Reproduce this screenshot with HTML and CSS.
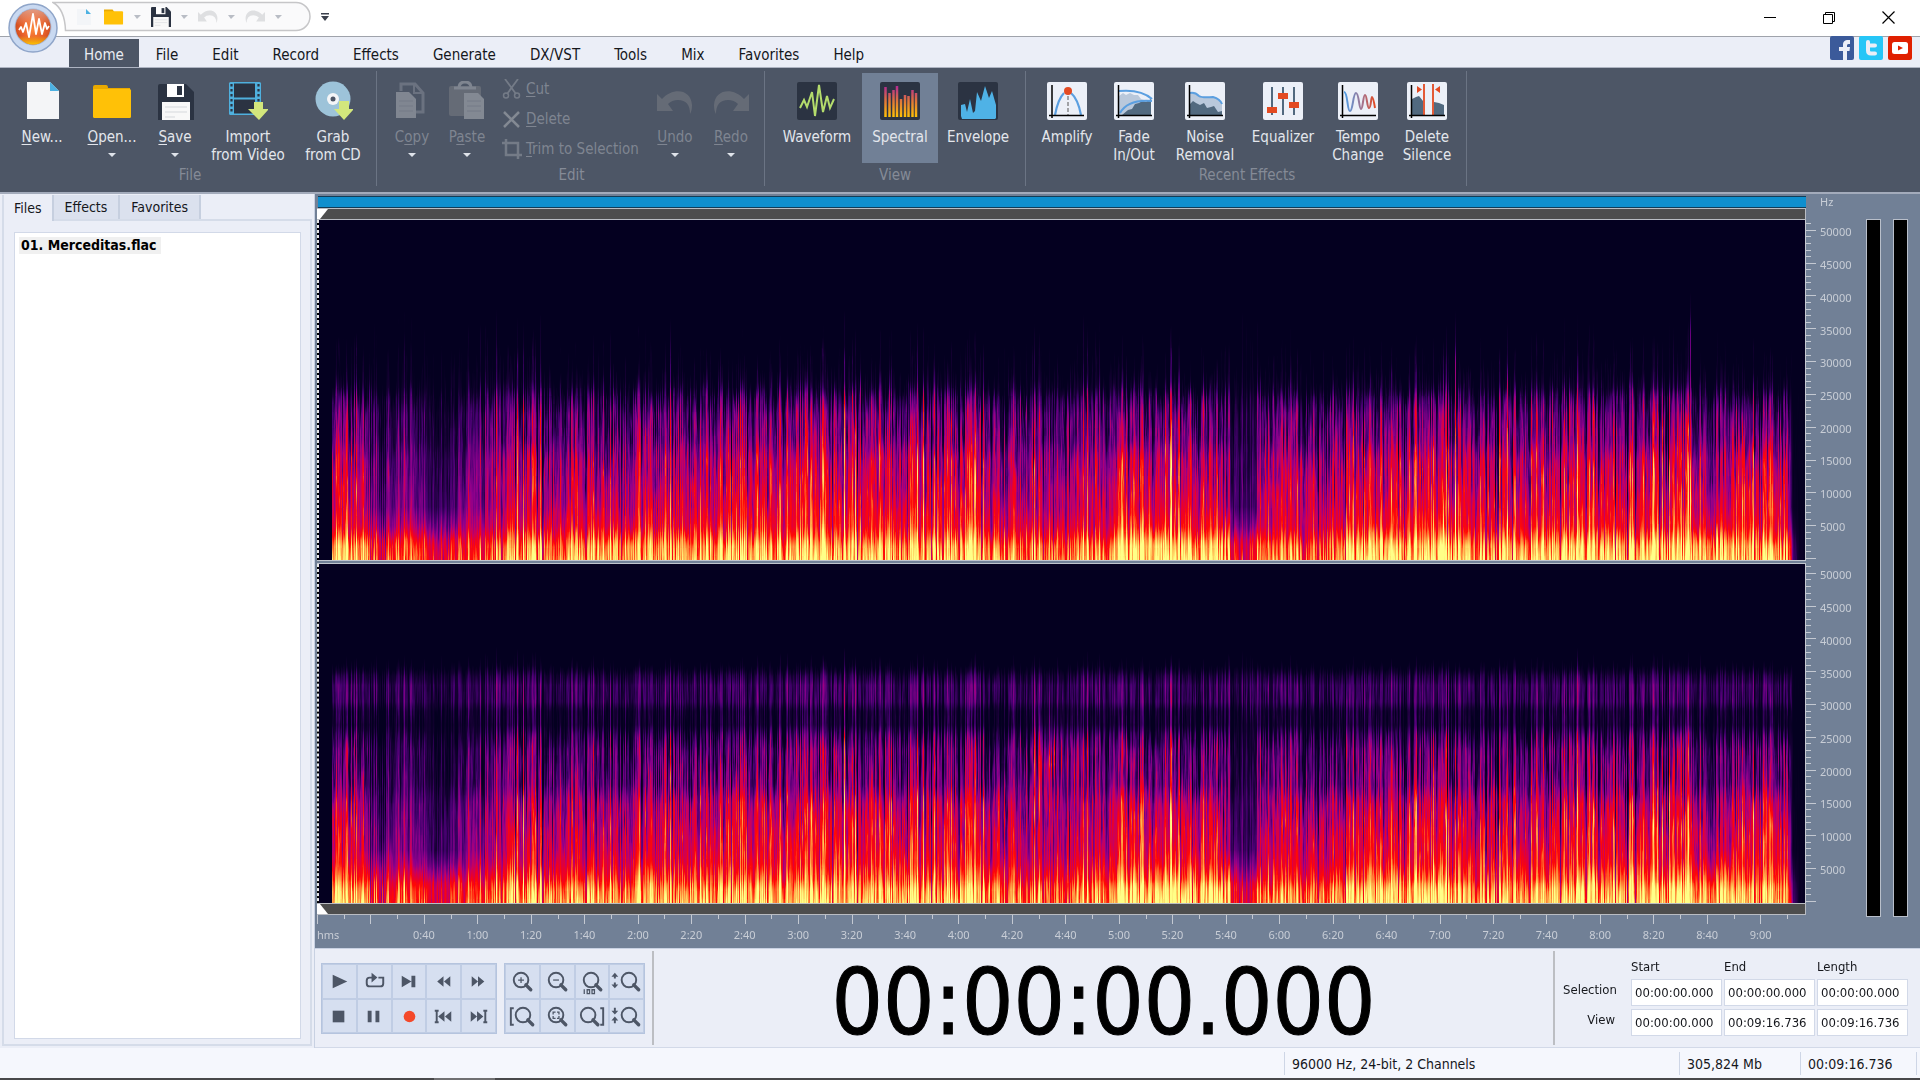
FILE: index.html
```html
<!DOCTYPE html>
<html lang="en">
<head>
<meta charset="utf-8">
<title>Audio Editor</title>
<link rel="stylesheet" href="styles.css">
</head>
<body>
<header class="titlebar">
  <button class="app-logo" aria-label="Application menu">
    <svg viewBox="0 0 50 50" width="50" height="50">
      <defs><radialGradient id="orb" cx=".5" cy=".55" r=".55"><stop offset="0" stop-color="#ff8a3c"/><stop offset=".6" stop-color="#e8602a"/><stop offset="1" stop-color="#c9481c"/></radialGradient>
      <linearGradient id="orbGlow" x1="0" y1="0" x2="0" y2="1"><stop offset="0" stop-color="#fff" stop-opacity=".45"/><stop offset=".45" stop-color="#fff" stop-opacity="0"/><stop offset=".75" stop-color="#ffd000" stop-opacity="0"/><stop offset="1" stop-color="#ffd000" stop-opacity=".9"/></linearGradient></defs>
      <circle cx="25" cy="25" r="24" fill="#c9d9f1" stroke="#8fa5c9" stroke-width="1.5"/>
      <circle cx="25" cy="24" r="18.5" fill="#a9b9d6"/>
      <circle cx="25" cy="24" r="17.5" fill="url(#orb)"/><circle cx="25" cy="24" r="17.5" fill="url(#orbGlow)"/>
      <path d="M11 27l2-3 2 5 3-9 3 14 4-23 3 20 3-15 3 15 3-11 2 6 2-3" fill="none" stroke="#fff" stroke-width="1.8" stroke-linejoin="round"/>
    </svg>
  </button>
  <nav class="quick" aria-label="Quick access">
    <svg class="quick-shape" viewBox="0 0 260 32" width="260" height="32"><path d="M1 2.500H244a14 14 0 0 1 0 28H13.500C13 16 9 7 1 2.500z" fill="#fafafb" stroke="#c6c6c8" stroke-width="1.500"/></svg>
    <button class="q-btn" aria-label="New"><svg width="16" height="18" viewBox="0 0 16 18"><path d="M1 1h9l5 5v11H1z" fill="#f3f5f8"/><path d="M10 1l5 5h-5z" fill="#4db1e2"/></svg></button>
    <button class="q-btn" aria-label="Open"><svg width="21" height="18" viewBox="0 0 21 18"><path d="M0 1h9l2 3H0z" fill="#e9a900"/><rect y="3" width="20" height="14" rx="1" fill="#ffc107"/></svg></button>
    <i class="caret pale"></i>
    <button class="q-btn" aria-label="Save"><svg width="21" height="20" viewBox="0 0 36 36"><use href="#floppy"/></svg></button>
    <i class="caret pale"></i>
    <button class="q-btn ghost" aria-label="Undo"><svg width="21" height="14" viewBox="0 0 36 24"><use href="#undo"/></svg></button>
    <i class="caret pale"></i>
    <button class="q-btn ghost" aria-label="Redo"><svg width="21" height="14" viewBox="0 0 36 24"><use href="#redo"/></svg></button>
    <i class="caret pale"></i>
    <button class="q-more" aria-label="Customize"><svg width="8" height="8" viewBox="0 0 8 8"><path d="M0 0h8v1.500H0zM0 3h8L4 8z" fill="#3a404c"/></svg></button>
  </nav>
  <div class="window-buttons">
    <button aria-label="Minimize"><svg width="13" height="13"><path d="M0 6.500h12" stroke="#000"/></svg></button>
    <button aria-label="Restore"><svg width="13" height="13"><path d="M.5 3.500h9v9h-9zM2.500 3.500v-2h9v9h-2" fill="none" stroke="#000"/></svg></button>
    <button aria-label="Close"><svg width="13" height="13"><path d="M.5.500l12 12M12.500.500l-12 12" stroke="#000" stroke-width="1.200"/></svg></button>
  </div>
</header>

<nav class="menu">
  <a class="active" href="#home">Home</a><a href="#file">File</a><a href="#edit">Edit</a><a href="#record">Record</a><a href="#effects">Effects</a><a href="#generate">Generate</a><a href="#dx">DX/VST</a><a href="#tools">Tools</a><a href="#mix">Mix</a><a href="#favorites">Favorites</a><a href="#help">Help</a>
  <div class="social">
    <button aria-label="Facebook"><svg width="24" height="24" viewBox="0 0 24 24"><rect width="24" height="24" rx="2" fill="#3b5a9a"/><path d="M13 24v-9H9v-4h4V9c0-4 2-5.500 7-5v4c-3-.3-3 0-3 3h3l-.5 4H17v9z" fill="#ebeef7"/></svg></button>
    <button aria-label="Twitter"><svg width="24" height="24" viewBox="0 0 24 24"><rect width="24" height="24" rx="2" fill="#26c6f7"/><path d="M9 6v8.500q0 3 3 3h4M9 9.500h7" fill="none" stroke="#ebeef7" stroke-width="4" stroke-linecap="round"/></svg></button>
    <button aria-label="YouTube"><svg width="24" height="24" viewBox="0 0 24 24"><rect width="24" height="24" rx="2" fill="#e02000"/><rect x="4" y="6" width="16" height="12" rx="2.500" fill="#fff"/><path d="M10 9.500l5 2.500-5 2.500z" fill="#e02000"/></svg></button>
  </div>
</nav>

<section class="ribbon" aria-label="Home">
  <div class="group narrow">
    <div class="tools">
      <button class="tool w70"><svg viewBox="0 0 40 40"><path d="M5 1h23l9 9v28H5z" fill="#f4f5f7"/><path d="M28 1l9 9h-9z" fill="#4db1e2"/></svg><span><u>N</u>ew...</span></button>
      <button class="tool w70"><svg viewBox="0 0 40 40"><path d="M1 6q0-2 2-2h11q2 0 2 3H38v6H1z" fill="#e9a900"/><rect x="1" y="8" width="38" height="29" rx="1.500" fill="#ffc107"/></svg><span><u>O</u>pen...</span><i class="caret"></i></button>
      <button class="tool w56"><svg viewBox="0 0 40 40"><defs><g id="floppy"><path d="M0 2q0-2 2-2h26l8 8v28H0z" fill="#2b3342"/><path d="M9 0h17v13H9z" fill="#fff"/><path d="M19 2h5v9h-5z" fill="#2b3342"/><path d="M4 18h28v18H4z" fill="#f8f8f8"/><path d="M7 23h22M7 28h22M7 33h10" stroke="#d5d8dc"/></g></defs><g transform="translate(3 3)"><use href="#floppy"/></g></svg><span><u>S</u>ave</span><i class="caret"></i></button>
      <button class="tool w90"><svg viewBox="0 0 40 40"><rect x="1" y="1" width="32" height="33" rx="1.500" fill="#4fb0de"/><path d="M6 2.500h21v14H6zM6 18.500h21v14H6z" fill="#2b3342"/><path d="M3.500 3v30M30.500 3v30" stroke="#2b3342" stroke-width="2.200" stroke-dasharray="2.500 2.500"/><path d="M26 21h9v7h6L31 39 20 28h6z" fill="#d3e77c"/></svg><span>Import<br>from Video</span></button>
      <button class="tool w80"><svg viewBox="0 0 40 40"><circle cx="20" cy="18" r="17.500" fill="#9dc3d9"/><circle cx="20" cy="18" r="6" fill="#f4f5f7"/><circle cx="20" cy="18" r="2.500" fill="#4d5666"/><path d="M26 20h10v8h5L31 39 21 28h5z" fill="#d3e77c"/></svg><span>Grab<br>from CD</span></button>
    </div>
    <h2>File</h2>
  </div>
  <div class="group">
    <div class="tools">
      <button class="tool w56 off" disabled><svg viewBox="0 0 40 40"><path d="M9 10V3h14l8 9v19H20" fill="none" stroke="#6b7280" stroke-width="3"/><path d="M22 3v9h9" fill="none" stroke="#6b7280" stroke-width="2"/><path d="M4 11h13l7 7v19H4z" fill="#808691"/><path d="M7 20h14M7 25h14M7 30h14" stroke="#747b87"/></svg><span>C<u>o</u>py</span><i class="caret"></i></button>
      <button class="tool w54 off" disabled><svg viewBox="0 0 40 40"><rect x="2" y="5" width="32" height="30" rx="2" fill="#656b76"/><path d="M12 7q0-6 6-6t6 6" fill="none" stroke="#7f8590" stroke-width="3"/><path d="M7 7h22" stroke="#7f8590" stroke-width="3"/><path d="M17 12h14l6 6v20H17z" fill="#838993"/><path d="M20 20h14M20 25h14M20 30h14" stroke="#747b87"/></svg><span>P<u>a</u>ste</span><i class="caret"></i></button>
      <div class="mini-list">
        <button class="mini" disabled><svg width="20" height="20" viewBox="0 0 20 20"><path d="M3 0l11 15M16 0L5 15" stroke="#747b87" stroke-width="1.800"/><circle cx="4" cy="16.500" r="2.500" fill="none" stroke="#747b87" stroke-width="1.500"/><circle cx="15" cy="16.500" r="2.500" fill="none" stroke="#747b87" stroke-width="1.500"/></svg><span><u>C</u>ut</span></button>
        <button class="mini" disabled><svg width="20" height="20" viewBox="0 0 20 20"><path d="M2 3l15 15M17 3L2 18" stroke="#838993" stroke-width="2.500"/></svg><span><u>D</u>elete</span></button>
        <button class="mini" disabled><svg width="20" height="20" viewBox="0 0 20 20"><path d="M0 4h16v16M4 0v16h16" fill="none" stroke="#747b87" stroke-width="2.500"/></svg><span><u>T</u>rim to Selection</span></button>
      </div>
      <button class="tool w56 off" disabled><svg viewBox="0 0 40 40"><g transform="translate(2 10)" fill="#656b76"><path id="undo" d="M0 3l5 5C16-4 34-2 35 14q0 6-2 9 0-14-12-14-6 0-10 4l5 7H0z"/></g></svg><span><u>U</u>ndo</span><i class="caret"></i></button>
      <button class="tool w56 off" disabled><svg viewBox="0 0 40 40"><g transform="translate(2 10)" fill="#656b76"><path id="redo" d="M36 3l-5 5C20-4 2-2 1 14q0 6 2 9 0-14 12-14 6 0 10 4l-5 7h16z"/></g></svg><span><u>R</u>edo</span><i class="caret"></i></button>
    </div>
    <h2>Edit</h2>
  </div>
  <div class="group wide">
    <div class="tools">
      <button class="tool w90"><svg viewBox="0 0 40 40"><rect y="1" width="40" height="38" rx="2" fill="#2b3342"/><path d="M3 27l4-8 3 7 5-15 3 24 4-31 4 27 4-16 3 12 4-9" fill="none" stroke="#b4dc6c" stroke-width="2"/></svg><span>Waveform</span></button>
      <button class="tool w76 on" aria-pressed="true"><svg viewBox="0 0 40 40"><defs><linearGradient id="bars" gradientUnits="userSpaceOnUse" x1="0" y1="4" x2="0" y2="36"><stop offset="0" stop-color="#b0249a"/><stop offset=".5" stop-color="#e0763a"/><stop offset="1" stop-color="#ffc107"/></linearGradient></defs><rect y="1" width="40" height="38" rx="2" fill="#2b3342"/><path d="M5.500 36V6M9.500 36V12M13.500 36V9M17 36V5M21 36V18M25 36V14M28.500 36V15M32.500 36V9M36 36V12" stroke="url(#bars)" stroke-width="2.500"/></svg><span>Spectral</span></button>
      <button class="tool w80"><svg viewBox="0 0 40 40"><rect y="1" width="40" height="38" rx="2" fill="#2b3342"/><path d="M3 35V24l4-1 2 8 3-13 3 14 2-2 2-19 4 9 4-15 4 12 3-7 4 14v13l-1 1H4z" fill="#4fb2e6"/></svg><span>Envelope</span></button>
    </div>
    <h2>View</h2>
  </div>
  <div class="group">
    <div class="tools">
      <button class="tool w68"><svg viewBox="0 0 40 40"><rect y="1" width="40" height="38" rx="2" fill="#ecf0f8"/><path d="M8 34Q11 18 17 12M24 12q7 6 10 22" fill="none" stroke="#5b9fe0" stroke-width="2.200"/><path d="M21 15v20" stroke="#555" stroke-dasharray="4 2"/><circle cx="21" cy="10" r="4" fill="#e34a22"/><path d="M5 4v33M2 34.500h35" stroke="#000" stroke-width="1.500"/></svg><span>Amplify</span></button>
      <button class="tool w66"><svg viewBox="0 0 40 40"><rect y="1" width="40" height="38" rx="2" fill="#ecf0f8"/><path d="M5 15l4-3 3 2 4-2 4 2 4 0 3 4 10 3v14H5z" fill="#b9c8db"/><path d="M8 34l6-5 4-1 3-5 4-1 3-2 4 1 5-3v17z" fill="#51697f"/><path d="M5 10q22-2 33 8M6 32q8-14 32-12" fill="none" stroke="#5b9fe0" stroke-width="2"/><path d="M4.500 4v33M2 34.500h36" stroke="#000" stroke-width="1.500"/></svg><span>Fade<br>In/Out</span></button>
      <button class="tool w76"><svg viewBox="0 0 40 40"><rect y="1" width="40" height="38" rx="2" fill="#ecf0f8"/><path d="M5 12q5-1 9 3 9 2 15 1 6 2 8 7v12H5z" fill="#b9c8db"/><path d="M5 23l3-3 3 2 4 2 4-2 3 5 4-1 3-1 4 6 4-1v5H5z" fill="#51697f"/><path d="M5 12q5-1 9 3 3 2 14 1 7 2 9 7" fill="none" stroke="#5b9fe0" stroke-width="2"/><path d="M4.500 4v33M2 34.500h36" stroke="#000" stroke-width="1.500"/></svg><span>Noise<br>Removal</span></button>
      <button class="tool w80"><svg viewBox="0 0 40 40"><rect y="1" width="40" height="38" rx="2" fill="#ecf0f8"/><path d="M9 6v28M20 6v28M31 6v28" stroke="#51697f" stroke-width="2"/><path d="M4 26h10v6H4zM15 12h10v6H15zM26 21h10v6H26z" fill="#e34a22"/></svg><span>Equalizer</span></button>
      <button class="tool w70"><svg viewBox="0 0 40 40"><defs><linearGradient id="hot"><stop offset="0" stop-color="#4d9fe8"/><stop offset=".6" stop-color="#a5728c"/><stop offset="1" stop-color="#e34a22"/></linearGradient></defs><rect y="1" width="40" height="38" rx="2" fill="#ecf0f8"/><path d="M6 11c4 0 3 19 6 19s3-18 6-18 3 16 5 16 2-14 4-14 2 13 4 13 2-11 3-11 2 5 3 11" fill="none" stroke="url(#hot)" stroke-width="2"/><path d="M4.500 4v33M2 34.500h36" stroke="#000" stroke-width="1.500"/></svg><span>Tempo<br>Change</span></button>
      <button class="tool w68"><svg viewBox="0 0 40 40"><rect y="1" width="40" height="38" rx="2" fill="#ecf0f8"/><path d="M5 18l4-2 3-1 4 5v14H5zM27 21l5 1 5 2v10H27z" fill="#51697f"/><path d="M17 3v32M26 3v32" stroke="#e34a22" stroke-width="1.800"/><path d="M10 5v7l5-3.500zM33 5v7l-5-3.500z" fill="#e34a22"/><path d="M4.500 4v33M2 34.500h36" stroke="#000" stroke-width="1.500"/></svg><span>Delete<br>Silence</span></button>
    </div>
    <h2>Recent Effects</h2>
  </div>
</section>

<main class="workspace">
  <aside class="side">
    <div class="side-tabs" role="tablist">
      <button role="tab" aria-selected="true">Files</button><button role="tab">Effects</button><button role="tab">Favorites</button>
    </div>
    <div class="side-body"><ul class="file-list"><li>01. Merceditas.flac</li></ul></div>
  </aside>

  <div class="main">
    <div class="stage">
      <div class="tracks">
        <div class="overview"></div>
        <div class="range"><svg width="11" height="10"><path d="M0 0h11L3 10H0z" fill="#fff"/></svg></div>
        <canvas class="channel" data-channel="1"></canvas>
        <div class="split"></div>
        <canvas class="channel" data-channel="2"></canvas>
        <div class="range"><svg width="11" height="10"><path d="M0 0h3l8 10H0z" fill="#fff"/></svg></div>
        <canvas class="time-ticks"></canvas>
        <div class="time-labels"><span class="unit">hms</span><span>0:40</span><span>1:00</span><span>1:20</span><span>1:40</span><span>2:00</span><span>2:20</span><span>2:40</span><span>3:00</span><span>3:20</span><span>3:40</span><span>4:00</span><span>4:20</span><span>4:40</span><span>5:00</span><span>5:20</span><span>5:40</span><span>6:00</span><span>6:20</span><span>6:40</span><span>7:00</span><span>7:20</span><span>7:40</span><span>8:00</span><span>8:20</span><span>8:40</span><span>9:00</span><i class="rest"></i></div>
      </div>
      <div class="scales">
        <div class="scale-unit">Hz</div>
        <div class="scale"><canvas class="hz-ticks"></canvas><div class="hz-labels"><span>50000</span><span>45000</span><span>40000</span><span>35000</span><span>30000</span><span>25000</span><span>20000</span><span>15000</span><span>10000</span><span>5000</span></div></div>
        <div class="scale"><canvas class="hz-ticks"></canvas><div class="hz-labels"><span>50000</span><span>45000</span><span>40000</span><span>35000</span><span>30000</span><span>25000</span><span>20000</span><span>15000</span><span>10000</span><span>5000</span></div></div>
      </div>
      <div class="meters"><div class="meter"></div><div class="meter"></div></div>
    </div>

    <div class="controls">
      <div class="pads">
        <div class="pad transport">
          <button aria-label="Play"><svg viewBox="0 0 34 34"><path d="M10 10l15 7-15 7z"/></svg></button>
          <button aria-label="Loop"><svg viewBox="0 0 34 34"><path d="M16 13h-4q-3 0-3 3v3q0 3 3 3h11q3 0 3-3v-6h-5" class="ln"/><path d="M14 8l6 5-6 5z"/></svg></button>
          <button aria-label="Play to end"><svg viewBox="0 0 34 34"><path d="M9 11l10 6-10 6zM19 11h4v12h-4z"/></svg></button>
          <button aria-label="Rewind"><svg viewBox="0 0 34 34"><path d="M17 11.500v11L10.500 17zM24 11.500v11L17.500 17z"/></svg></button>
          <button aria-label="Forward"><svg viewBox="0 0 34 34"><path d="M10 11.500v11l6.500-5.500zM16.500 11.500v11L23 17z"/></svg></button>
          <button aria-label="Stop"><svg viewBox="0 0 34 34"><path d="M10 11h12v12H10z"/></svg></button>
          <button aria-label="Pause"><svg viewBox="0 0 34 34"><path d="M10 11h4v12h-4zM18 11h4v12h-4z"/></svg></button>
          <button aria-label="Record"><svg viewBox="0 0 34 34"><circle cx="17" cy="17" r="6" fill="#f4492a"/></svg></button>
          <button aria-label="Go to start"><svg viewBox="0 0 34 34"><path d="M8 10h4v2h-1v10h1v2H8v-2h1V12H8zM18 11.500v11L11.500 17zM25 11.500v11L18.500 17z"/></svg></button>
          <button aria-label="Go to end"><svg viewBox="0 0 34 34"><path d="M9 11.500v11l6.500-5.500zM15.500 11.500v11L22 17zM22 10h4v2h-1v10h1v2h-4v-2h1V12h-1z"/></svg></button>
        </div>
        <div class="pad zoom">
          <button aria-label="Zoom in"><svg viewBox="0 0 34 34"><g id="lens"><circle cx="15.500" cy="15.500" r="7.500" class="ln thick"/><path d="M20.500 20.500l5 5" class="ln handle"/></g><path d="M12.500 15.500h6M15.500 12.500v6" class="ln fine"/></svg></button>
          <button aria-label="Zoom out"><svg viewBox="0 0 34 34"><use href="#lens"/><path d="M12.500 15.500h6" class="ln fine"/></svg></button>
          <button aria-label="Zoom 100"><svg viewBox="0 0 34 34"><use href="#lens"/><path d="M8.500 25v5M11.500 25.500h2.500v4h-2.500zM16.500 25.500H19v4h-2.500z" class="ln fine"/></svg></button>
          <button aria-label="Vertical zoom in"><svg viewBox="0 0 34 34"><g transform="translate(4 0)"><use href="#lens"/></g><path d="M5 8l3.500 4H6v2H4v-2H1.500zM5 24l3.500-4H6v-2H4v2H1.500z"/></svg></button>
          <button aria-label="Zoom selection start"><svg viewBox="0 0 34 34"><g transform="translate(2 0)"><use href="#lens"/></g><path d="M8 8.500H5v17h3" class="ln"/></svg></button>
          <button aria-label="Zoom to selection"><svg viewBox="0 0 34 34"><use href="#lens"/><path d="M12.500 15v-2.500H15M16.500 12.500H18.500V15M18.500 16.500v2.500h-2M15 19h-2.500v-2.500" class="ln fine"/></svg></button>
          <button aria-label="Zoom selection end"><svg viewBox="0 0 34 34"><g transform="translate(-3 0)"><use href="#lens"/></g><path d="M25 8.500h3v17h-3" class="ln"/></svg></button>
          <button aria-label="Vertical zoom out"><svg viewBox="0 0 34 34"><g transform="translate(4 0)"><use href="#lens"/></g><path d="M5 15l3.500-4H6V8H4v3H1.500zM5 17l3.500 4H6v3H4v-3H1.500z"/></svg></button>
        </div>
      </div>
      <output class="clock">00:00:00.000</output>
      <div class="times">
        <span></span><span class="col">Start</span><span class="col">End</span><span class="col">Length</span>
        <span class="row">Selection</span><input aria-label="Selection start" value="00:00:00.000"><input aria-label="Selection end" value="00:00:00.000"><input aria-label="Selection length" value="00:00:00.000">
        <span class="row">View</span><input aria-label="View start" value="00:00:00.000"><input aria-label="View end" value="00:09:16.736"><input aria-label="View length" value="00:09:16.736">
      </div>
    </div>
  </div>
</main>

<footer class="status">
  <span class="format">96000 Hz, 24-bit, 2 Channels</span><span class="size">305,824 Mb</span><span class="length">00:09:16.736</span><i class="grip"></i>
</footer>
<div class="dock"><i></i></div>
<script src="spectrum.js"></script>
</body>
</html>
```
FILE: styles.css
```css
* { box-sizing: border-box; }
html, body { height: 100%; margin: 0; }
body {
  display: flex; flex-direction: column; overflow: hidden;
  background: #ebeef7; color: #15171c;
  font: 14px/18px "DejaVu Sans Condensed", "Noto Sans", sans-serif;
}
button { margin: 0; padding: 0; border: 0; background: none; color: inherit; font: inherit; }
svg { display: block; flex: none; }
u { text-decoration-thickness: 1px; text-underline-offset: 2px; }

.titlebar { position: relative; display: flex; justify-content: space-between; flex: none; height: 37px; background: #fff; border-bottom: 1px solid #9fa3ab; }
.app-logo { position: absolute; left: 8px; top: 3px; z-index: 2; }
.quick { position: relative; display: flex; align-items: center; height: 33px; padding-left: 75px; }
.quick-shape { position: absolute; left: 52px; top: 0; }
.q-btn { position: relative; display: flex; justify-content: center; width: 28px; }
.q-btn svg { width: 20px; }
.q-btn:first-of-type { width: 18px; }
.q-btn:first-of-type svg { width: 16px; }
.q-btn + .q-btn { margin-left: 7px; }
.ghost { fill: #dedfe1; }
.q-more { margin-left: 33px; }
.caret { position: relative; display: block; width: 0; height: 0; border: 4px solid transparent; border-top: 4px solid #dfe3ea; border-bottom: 0; }
.quick .caret { margin: 0 6px; }
.caret.pale { border-top-color: #b9bdc5; border-left-width: 3px; border-right-width: 4px; }
.window-buttons { display: flex; padding-right: 2px; height: 35px; }
.window-buttons button { width: 59px; display: flex; justify-content: center; align-items: center; }

.menu { display: flex; align-items: stretch; flex: none; height: 31px; padding: 2px 8px 0 69px; border-bottom: 1px solid #aeb4c2; font-size: 15px; }
.menu a { padding: 7px 17px 0; color: #15171c; text-decoration: none; }
.menu a.active { padding: 7px 15px 0; background: #4d5666; color: #e9ecf2; }
.social { display: flex; align-items: flex-start; gap: 5px; margin: -3px 0 0 auto; z-index: 1; }

.ribbon { display: flex; flex: none; height: 126px; padding: 3px 0 6px; background: #4d5666; border-bottom: 2px solid #a3abbb; color: #e3e6ec; font-size: 15px; }
.group { display: flex; flex-direction: column; justify-content: space-between; padding: 2px 5px 2px 7px; border-right: 1px solid #6b7484; }
.group.narrow { padding-right: 3px; }
.group.wide { padding-right: 7px; }
.group h2 { margin: 0; font: inherit; text-align: center; color: #858b97; }
.tools { display: flex; }
.tool { display: flex; flex-direction: column; align-items: center; height: 90px; padding-top: 8px; white-space: nowrap; }
.tool > svg { width: 40px; height: 40px; }
.tool span { margin-top: 7px; }
.tool .caret { margin-top: 7px; }
.tool.on { background: #718096; }
.off, .mini { color: #7f8591; }
.w54 { width: 54px; } .w56 { width: 56px; } .w66 { width: 66px; } .w68 { width: 68px; } .w70 { width: 70px; }
.w76 { width: 76px; } .w80 { width: 80px; } .w90 { width: 90px; }
.mini-list { display: flex; flex-direction: column; gap: 10px; width: 153px; padding: 6px 0 0 8px; white-space: nowrap; }
.mini { display: flex; align-items: center; gap: 4px; height: 20px; }

.workspace { display: flex; flex: 1; min-height: 0; }
.side { display: flex; flex-direction: column; flex: none; width: 315px; padding: 1px 2px 2px; border-right: 1px solid #c8d1e2; }
.side-tabs { display: flex; height: 24px; flex: none; z-index: 1; }
.side-tabs button { padding: 0 11px; background: #dbe1ee; border: 1px solid #c6cfdf; border-width: 0 2px 0 0; }
.side-tabs button[aria-selected] { height: 26px; padding: 0 10px; background: #ebeef7; border-left: 2px solid #d5dce9; }
.side-body { flex: 1; padding: 11px 9px 5px 10px; border: 2px solid #d5dce9; }
.file-list { height: 100%; margin: 0; padding: 4px; list-style: none; background: #fff; border: 1px solid #d2d9e8; }
.file-list li { width: max-content; padding: 0 5px 0 2px; background: #f0f0f0; font-weight: bold; color: #000; line-height: 17px; }

.main { display: flex; flex-direction: column; flex: 1; min-width: 0; }
.stage { display: flex; flex: 1; min-height: 0; padding: 2px 0 0 2px; background: #718096; border-bottom: 1px solid #c8d1e2; }
.tracks { display: flex; flex-direction: column; flex: 1; min-width: 0; }
.overview { height: 12px; margin-left: 1px; background: #0f8fce; border: 1px solid #123d58; border-width: 1px 0; }
.range { height: 12px; background: #4d4d4d; border: 1px solid #b9bcc2; border-width: 1px 1px 1px 0; }
.channel { display: block; flex: 1 1 0; width: 100%; min-height: 0; border-right: 1px solid #c4c8d0; }
.split { height: 4px; border: 1px solid #c0c5ce; border-width: 1px 0; }
.time-ticks { display: block; width: 100%; height: 10px; }
.time-labels { display: flex; height: 23px; padding-top: 2px; color: #c8cdd6; font: 11px/16px "Noto Sans", sans-serif; }
.time-labels span { flex: 20 1 0; width: 0; text-align: center; white-space: nowrap; }
.time-labels .unit { flex-grow: 30; text-align: left; }
.time-labels .rest { flex: 7 1 0; }
.scales { display: flex; flex-direction: column; flex: none; gap: 4px; width: 60px; padding-bottom: 46px; color: #c8cdd6; font: 11px/16px "Noto Sans", sans-serif; }
.scale-unit { height: 20px; padding-left: 14px; line-height: 12px; }
.scale { display: flex; flex: 1; min-height: 0; gap: 4px; }
.hz-ticks { width: 10px; height: 100%; }
.hz-labels { display: flex; flex-direction: column; padding: 0 0 16px; margin-top: -4px; justify-content: flex-end; }
.hz-labels span { display: flex; align-items: center; flex: 0 0 10%; height: 10%; }
.meters { display: flex; gap: 12px; flex: none; width: 54px; padding: 23px 0 31px; }
.meter { width: 15px; background: #000; border: 1px solid #b9bfca; }

.controls { display: flex; flex: none; height: 99px; padding: 2px 0; border-bottom: 1px solid #d2d9e8; }
.pads { display: flex; gap: 7px; padding: 12px 7px 0 6px; border-right: 2px solid #bcbec3; }
.pad { display: grid; grid-template-columns: repeat(5, 1fr); grid-auto-rows: 1fr; width: 176px; height: 71px; border: 1px solid #b5c4de; }
.pad.zoom { grid-template-columns: repeat(4, 1fr); width: 141px; }
.pad button { background: #d6dff0; border: 1px solid #c0cde4; fill: #4d5666; overflow: hidden; }
.pad svg { width: 33px; height: 33px; }
.ln { fill: none; stroke: #4d5666; stroke-width: 2; }
.thick { stroke-width: 2; }
.handle { stroke-width: 3.500; stroke-linecap: round; }
.fine { stroke-width: 1.300; }
.clock { flex: 1; padding-top: 2px; text-align: center; color: #000; font-size: 90px; line-height: 100px; white-space: nowrap; -webkit-text-stroke: 1px #000; }
.times { display: grid; grid-template-columns: 66px repeat(3, 91px); grid-template-rows: 24px 28px 28px; column-gap: 2px; row-gap: 2px; padding: 1px 12px 0 8px; border-left: 2px solid #bcbec3; align-items: center; }
.times .col { align-self: end; font-size: 13px; }
.times .row { text-align: right; padding-right: 14px; margin-top: -4px; font-size: 13px; }
.times input { width: 100%; height: 27px; padding: 0 3px; border: 1px solid #d2d9e8; background: #fff; color: #15171c; font: inherit; font-size: 13px; }

.status { display: flex; justify-content: flex-end; align-items: center; flex: none; height: 30px; background: #f5f7fd; }
.status span { height: 23px; padding-left: 7px; border-left: 1px solid #ced6e6; line-height: 24px; }
.format { width: 395px; } .size { width: 121px; } .length { width: 116px; }
.grip { width: 4px; height: 23px; border-left: 1px solid #ced6e6; }
.dock { height: 2px; flex: none; padding-left: 434px; background: #48484a; }
.dock i { display: block; width: 61px; height: 2px; background: #707072; }
```
FILE: spectrum.js
```js
// Draws the two spectral channels and the ruler ticks.
const DURATION = 556.736;
const TOP_HZ = 51500;
const PALETTE = [
  [0, 4, 0, 32], [0.12, 22, 0, 52], [0.26, 70, 0, 112], [0.4, 142, 0, 140], [0.5, 196, 0, 100],
  [0.6, 236, 0, 40], [0.68, 255, 10, 5], [0.78, 255, 110, 45], [0.9, 255, 200, 90], [1, 255, 255, 135]
];
// Loudness along the file: fraction of length, middle band, low band.
const LOUDNESS = [
  [0, 0, 0], [0.0095, 0, 0], [0.010, 0.88, 0.98], [0.032, 0.86, 0.98], [0.036, 0.56, 0.8], [0.07, 0.56, 0.82],
  [0.074, 0.38, 0.7], [0.09, 0.42, 0.76], [0.1, 0.58, 0.8], [0.126, 0.7, 0.82], [0.13, 0.84, 0.96],
  [0.22, 0.88, 0.98], [0.28, 0.96, 1], [0.46, 0.98, 1], [0.467, 0.8, 0.89], [0.535, 0.78, 0.89], [0.539, 1.0, 1.1],
  [0.605, 0.97, 1.09], [0.616, 0.45, 0.8], [0.624, 0.3, 0.55], [0.63, 0.36, 0.72], [0.634, 0.86, 0.9],
  [0.68, 0.88, 0.93], [0.7, 0.98, 1.06], [0.76, 0.98, 1.06], [0.78, 0.94, 0.98], [0.92, 0.97, 1.03], [0.935, 0.76, 1],
  [0.947, 0.78, 1], [0.955, 1.04, 1.04], [0.9885, 1, 1], [0.991, 0.15, 0.45], [0.996, 0.02, 0.05], [1, 0, 0]
];
const CURVES = {
  1: [[0, 0.92], [2, 0.86], [3.5, 0.75], [5, 0.67], [10, 0.6], [15, 0.52], [18, 0.4], [22, 0.32], [24, 0.22], [26, 0.07], [29, -0.04], [35, -0.16], [52, -0.5]],
  2: [[0, 0.92], [2, 0.86], [3.5, 0.76], [6, 0.67], [11, 0.61], [15, 0.53], [18, 0.38], [23, 0.32], [25.5, 0.2], [27, 0.1], [29, 0.11], [30.5, 0.23], [33, 0.24], [34.5, 0.14], [36, -0.04], [40, -0.3], [52, -0.6]]
};
// Strength of the column noise by frequency.
const CONTRAST = [[0, 0.95], [6, 0.8], [12, 1.05], [25, 1.15], [27, 0.75], [35, 0.6], [44, 0.3]];
// Short transients in the first channel: position and reach in kHz.
const SPIKES = [[0.757, 6], [0.765, 7], [0.9226, 12], [0.8, 4], [0.365, 3]];

function hash(a, b) {
  let h = Math.imul(a + 374761, 668265263) ^ Math.imul(b + 9173, 2246822519);
  h = Math.imul(h ^ (h >>> 15), 2246822519);
  h = Math.imul(h ^ (h >>> 13), 3266489917);
  return ((h ^ (h >>> 16)) >>> 0) / 4294967296;
}
function sample(table, x, k) {
  let i = 1;
  while (i < table.length - 1 && table[i][0] < x) i++;
  const a = table[i - 1], b = table[i];
  const t = Math.min(1, Math.max(0, (x - a[0]) / (b[0] - a[0])));
  return a[k] + (b[k] - a[k]) * t;
}
function smooth(x, seed) {
  const i = Math.floor(x), t = x - i;
  return hash(i, seed) * (1 - t) + hash(i + 1, seed) * t;
}
function fit(canvas) {
  canvas.width = canvas.clientWidth;
  canvas.height = canvas.clientHeight;
  return canvas.getContext("2d");
}
function drawChannel(canvas) {
  const ctx = fit(canvas), w = canvas.width, h = canvas.height;
  const ch = Number(canvas.dataset.channel), image = ctx.createImageData(w, h);
  for (let x = 0; x < w; x++) {
    const p = x / w;
    const mid = sample(LOUDNESS, p, 1), low = sample(LOUDNESS, p, 2);
    const quick = hash(x, 5) - 0.5, pair = smooth(x / 2, 6) - 0.5, slow = smooth(x / 11, 7) - 0.5;
    const burst = Math.pow(hash(x, 8), 9) * 0.26 - Math.pow(hash(x, 12), 6) * 0.24;
    let spike = 0;
    if (ch === 1) for (const s of SPIKES) if (Math.round(s[0] * w) === x) spike = s[1];
    const column = quick * 0.24 + pair * 0.24 + slow * 0.08 + burst;
    const swell = ch === 2 ? Math.max(0, 1 - Math.abs(p - 0.495) / 0.024) * hash(x, 21) * 0.5 : 0;
    for (let y = 0; y < h; y++) {
      const khz = (h - 1 - y) / h * TOP_HZ / 1000;
      const blend = Math.min(1, Math.max(0, (khz - 3) / 5));
      let env = low + (mid - low) * blend;
      if (ch === 2 && khz > 26) {
        const lift = Math.min(1, (khz - 26) / 3);
        const flat = env > 0.2 ? 0.9 + (env - 0.9) * 0.4 : env;
        env += (flat - env) * lift;
      }
      const hot = swell * Math.max(0, 1 - Math.abs(khz - 21) / 9);
      const warp = spike ? Math.max(0, khz - spike) : khz;
      const fine = smooth(y / 18 + hash(x, 3) * 9, x * 3 + ch) - 0.5;
      const patch = smooth(y / 30 + hash(x >> 2, 4) * 9, (x >> 2) * 5 + ch + 900) - 0.5;
      const grain = hash(x * 7 + ch, 40 + (y >> 3)) - 0.5;
      let v = sample(CURVES[ch], warp, 1) * env + hot;
      if (env > 0.02) v += (column + fine * 0.2 + patch * 0.1 + grain * 0.03) * sample(CONTRAST, khz, 1) * Math.min(1, env + 0.1);
      v = Math.min(1, Math.max(0, v));
      const o = (y * w + x) * 4;
      image.data[o] = sample(PALETTE, v, 1);
      image.data[o + 1] = sample(PALETTE, v, 2);
      image.data[o + 2] = sample(PALETTE, v, 3);
      image.data[o + 3] = 255;
    }
  }
  ctx.putImageData(image, 0, 0);
  // Play cursor: a dotted line at the start of the file.
  for (let y = 0; y < h; y++) {
    ctx.fillStyle = y % 5 < 3 ? "#e8e8e8" : "#000";
    ctx.fillRect(0, y, 2, 1);
  }
}
function drawTimeTicks(canvas) {
  const ctx = fit(canvas);
  ctx.fillStyle = "#c4c9d2";
  for (let s = 0; s < DURATION; s += 10) {
    ctx.fillRect(Math.round(s / DURATION * (canvas.width - 1)), 0, 1, s % 20 ? 4 : 9);
  }
}
function drawHzTicks(canvas) {
  const ctx = fit(canvas);
  ctx.fillStyle = "#c4c9d2";
  for (let k = 0; k <= 51; k++) {
    ctx.fillRect(0, Math.round((1 - k * 1000 / TOP_HZ) * (canvas.height - 1)), k % 5 ? 5 : 10, 1);
  }
}
function draw() {
  document.querySelectorAll(".channel").forEach(drawChannel);
  document.querySelectorAll(".time-ticks").forEach(drawTimeTicks);
  document.querySelectorAll(".hz-ticks").forEach(drawHzTicks);
}
draw();
window.addEventListener("resize", draw);
```
